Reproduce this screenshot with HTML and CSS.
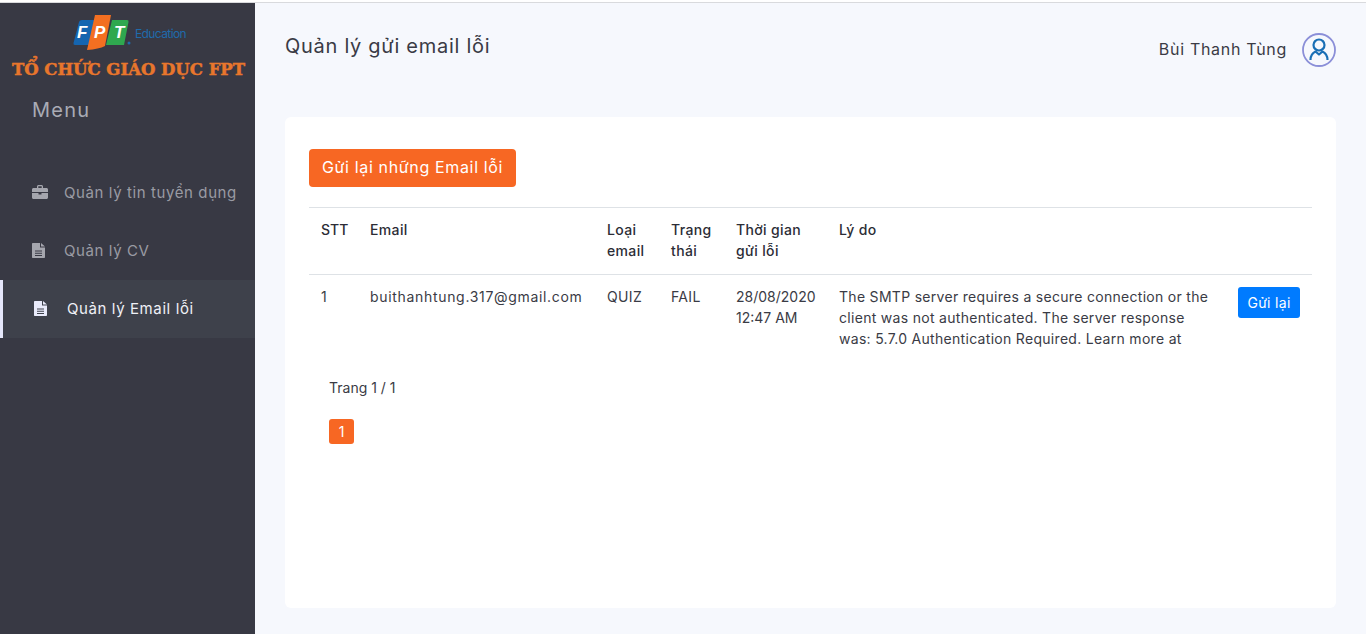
FILE: index.html
```html
<!DOCTYPE html>
<html lang="vi">
<head>
  <meta charset="UTF-8" />
  <title>Quản lý gửi email lỗi</title>
  <link rel="stylesheet" href="styles.css">
</head>
<body>
  <div class="app">
    <aside class="sidebar">
      <div class="brand">
        <div class="brand-top">
          <svg class="fpt-logo" width="58" height="36" viewBox="0 0 58 36">
            <path d="M6 7 Q6.500 5 9 5 H24 L19 30 H2 Q0 30 .5 28 Z" fill="#1565b0"/>
            <path d="M22 0 H38 L32 31 Q26 34 14 35 Z" fill="#f36f21"/>
            <path d="M39 5 H54 Q56 5 55.500 7 L51 30 H33 Z" fill="#2fa84f"/>
            <circle cx="56" cy="28" r="1.500" fill="#1f6bab"/>
            <text x="4" y="23" class="fpt-letter">F</text>
            <text x="21" y="23" class="fpt-letter">P</text>
            <text x="41" y="23" class="fpt-letter">T</text>
          </svg>
          <span class="edu">Education</span>
        </div>
        <div class="brand-name">TỔ CHỨC GIÁO DỤC FPT</div>
      </div>
      <div class="menu-title">Menu</div>
      <nav class="menu">
        <a class="menu-item">
          <svg class="menu-icon" width="16" height="14" viewBox="0 0 16 14"><path d="M5 3V1.500C5 .7 5.700 0 6.500 0h3c.8 0 1.500.7 1.500 1.500V3h3.500c.8 0 1.500.7 1.500 1.500V7H0V4.500C0 3.700.7 3 1.500 3zm1.300 0h3.400V1.300H6.300zM0 8h6.500v1.500h3V8H16v4.500c0 .8-.7 1.500-1.500 1.500h-13C.7 14 0 13.300 0 12.500z"/></svg>
          <span>Quản lý tin tuyển dụng</span>
        </a>
        <a class="menu-item">
          <svg class="menu-icon" width="16" height="15" viewBox="0 0 16 15"><path d="M1 0h7v4.500h5V14c0 .6-.4 1-1 1H1c-.6 0-1-.4-1-1V1c0-.6.4-1 1-1zm8 0 4 3.500H9zM3 7.500v1h7v-1zm0 2.300v1h7v-1zm0 2.300v1h7v-1z" fill-rule="evenodd"/></svg>
          <span>Quản lý CV</span>
        </a>
        <a class="menu-item active">
          <svg class="menu-icon" width="16" height="15" viewBox="0 0 16 15"><path d="M1 0h7v4.500h5V14c0 .6-.4 1-1 1H1c-.6 0-1-.4-1-1V1c0-.6.4-1 1-1zm8 0 4 3.500H9zM3 7.500v1h7v-1zm0 2.300v1h7v-1zm0 2.300v1h7v-1z" fill-rule="evenodd"/></svg>
          <span>Quản lý Email lỗi</span>
        </a>
      </nav>
    </aside>

    <main class="content">
      <header class="topbar">
        <h1>Quản lý gửi email lỗi</h1>
        <div class="user">
          <span class="user-name">Bùi Thanh Tùng</span>
          <svg class="avatar" width="34" height="34" viewBox="0 0 34 34" fill="none">
            <circle cx="17" cy="17" r="16" stroke="#8b8fd8" stroke-width="1.800"/>
            <circle cx="17" cy="12" r="5.500" stroke="#1a6fb5" stroke-width="2.200"/>
            <path d="M8.500 27c0-4 2-7 5-8.500l3.500 3 3.500-3c3 1.500 5 4.500 5 8.500" stroke="#1a6fb5" stroke-width="2.200" stroke-linejoin="round"/>
          </svg>
        </div>
      </header>

      <section class="card">
        <button class="btn-resend-all">Gửi lại những Email lỗi</button>
        <table class="error-table">
          <thead>
            <tr>
              <th class="col-stt">STT</th>
              <th class="col-email">Email</th>
              <th class="col-type">Loại email</th>
              <th class="col-status">Trạng thái</th>
              <th class="col-time">Thời gian gửi lỗi</th>
              <th class="col-reason">Lý do</th>
              <th class="col-action"></th>
            </tr>
          </thead>
          <tbody>
            <tr>
              <td>1</td>
              <td class="cell-email">buithanhtung.317@gmail.com</td>
              <td>QUIZ</td>
              <td>FAIL</td>
              <td class="cell-time">28/08/2020 12:47 AM</td>
              <td class="cell-reason">The SMTP server requires a secure connection or the client was not authenticated. The server response was: 5.7.0 Authentication Required. Learn more at</td>
              <td><button class="btn-resend">Gửi lại</button></td>
            </tr>
          </tbody>
        </table>
        <div class="pager">
          <p>Trang 1 / 1</p>
          <span class="page-num">1</span>
        </div>
      </section>
    </main>
  </div>
</body>
</html>
```

FILE: styles.css
```css
* {
  box-sizing: border-box;
}

body {
  margin: 0;
  font-family: "Inter", "Open Sans", sans-serif;
  font-size: 14px;
  color: #3a3b45;
  background: #fff;
  overflow: hidden;
}

.app {
  display: flex;
  height: 632px;
  margin-top: 2px;
  border-top: 1px solid #d9dadd;
}

.sidebar {
  width: 255px;
  flex-shrink: 0;
  background: #383944;
}

.brand {
  height: 95px;
  padding-top: 12px;
}

.brand-top {
  display: flex;
  justify-content: center;
  align-items: center;
  gap: 4px;
  height: 36px;
  padding-left: 4px;
}

.fpt-letter {
  font-family: "Liberation Sans", sans-serif;
  font-weight: 700;
  font-style: italic;
  font-size: 17px;
  fill: #fff;
}

.edu {
  font-size: 12px;
  color: #1f6bab;
  letter-spacing: -0.6px;
}

.brand-name {
  margin-top: 9px;
  padding-left: 2px;
  text-align: center;
  font-family: "DejaVu Serif", serif;
  font-weight: 700;
  font-size: 16.5px;
  color: #e8762c;
  white-space: nowrap;
  -webkit-text-stroke: 0.5px #e8762c;
}

.menu-title {
  padding-left: 32px;
  font-size: 20px;
  line-height: 24px;
  color: #a9abb5;
  letter-spacing: 1.2px;
}

.menu {
  margin-top: 42px;
}

.menu-item {
  display: flex;
  align-items: center;
  height: 58px;
  padding-left: 32px;
  padding-bottom: 2px;
  gap: 16px;
  font-size: 15px;
  color: #9a9ba3;
  letter-spacing: 0.6px;
}

.menu-icon {
  fill: #a5a6ae;
  flex-shrink: 0;
}

.menu-item.active {
  padding-left: 31px;
  gap: 17px;
  border-left: 3px solid #e5e7fb;
  background: #3e414b;
  color: #eff0f6;
}

.menu-item.active .menu-icon {
  fill: #e9ebfb;
}

.content {
  flex: 1;
  padding: 0 30px;
  background: #f6f8fd;
}

.topbar {
  display: flex;
  justify-content: space-between;
  align-items: flex-start;
  height: 114px;
}

.topbar h1 {
  margin: 30px 0 0;
  font-size: 20px;
  line-height: 26px;
  font-weight: 400;
  letter-spacing: 0.72px;
  color: #3a3b45;
}

.user {
  display: flex;
  align-items: center;
  gap: 15px;
  margin-top: 30px;
  font-size: 16px;
  letter-spacing: 0.7px;
}

.user-name {
  padding-bottom: 2px;
}

.card {
  height: 491px;
  padding: 32px 24px;
  background: #fff;
  border-radius: 6px;
}

.btn-resend-all {
  display: block;
  height: 38px;
  width: 207px;
  padding: 0 0 2px;
  border: 0;
  border-radius: 4px;
  background: #f76723;
  color: #fff;
  font-family: inherit;
  font-size: 16px;
  letter-spacing: 0.65px;
}

.error-table {
  width: 1003px;
  margin-top: 20px;
  border-collapse: collapse;
  table-layout: fixed;
  line-height: 21px;
  letter-spacing: 0.35px;
}

.error-table th {
  padding: 11px 12px 13px;
  border-top: 1px solid #dee2e6;
  border-bottom: 1px solid #dee2e6;
  text-align: left;
  vertical-align: top;
  font-weight: 500;
  color: #2c2d36;
}

.error-table td {
  padding: 11px 12px 13px;
  vertical-align: top;
}

.col-stt { width: 49px; letter-spacing: 0; }
.col-email { width: 237px; }
.col-type { width: 64px; }
.col-status { width: 65px; }
.col-time { width: 103px; }
.col-reason { width: 399px; }

.cell-email {
  letter-spacing: 0.68px;
}

.cell-time {
  letter-spacing: 0;
}

.cell-reason {
  letter-spacing: 0.3px;
}

.btn-resend {
  display: block;
  width: 62px;
  height: 31px;
  margin-top: 1px;
  padding: 0;
  border: 0;
  border-radius: 3px;
  background: #007bff;
  color: #fff;
  font-family: inherit;
  font-size: 14px;
  letter-spacing: 0.3px;
}

.pager {
  padding-left: 20px;
  margin-top: 15px;
}

.pager p {
  margin: 0 0 21px;
  line-height: 21px;
}

.page-num {
  display: block;
  width: 25px;
  height: 25px;
  border-radius: 3px;
  background: #f76723;
  color: #fff;
  text-align: center;
  line-height: 25px;
}
```
